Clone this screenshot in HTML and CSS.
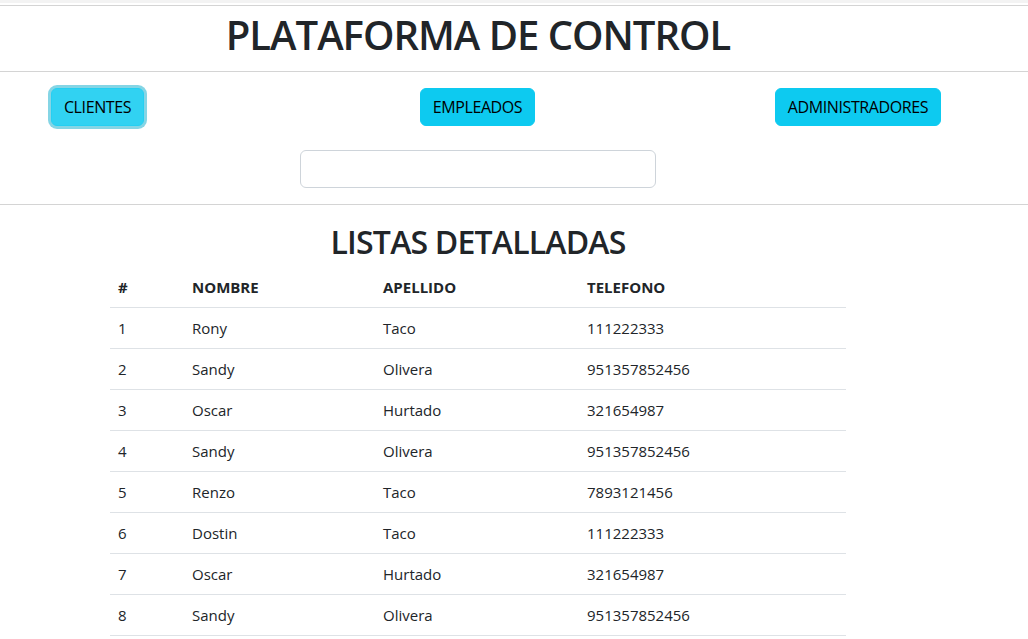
FILE: index.html
```html
<!DOCTYPE html>
<html lang="es">
<head>
<meta charset="utf-8">
<title>Plataforma de control</title>
<link rel="stylesheet" href="styles.css">
</head>
<body>
<div class="topstrip"></div>
<hr class="rule rule-top">
<div class="page">
  <h1 class="title">PLATAFORMA DE CONTROL</h1>
</div>
<hr class="rule">
<div class="page">
  <nav class="tabs">
    <div class="tab-cell"><button class="btn btn-active">CLIENTES</button></div>
    <div class="tab-cell"><button class="btn">EMPLEADOS</button></div>
    <div class="tab-cell"><button class="btn">ADMINISTRADORES</button></div>
  </nav>
  <div class="search-row"><input class="search" type="text"></div>
</div>
<hr class="rule">
<div class="page">
  <h2 class="subtitle">LISTAS DETALLADAS</h2>
  <table class="list">
    <thead>
      <tr><th class="c1">#</th><th class="c2">NOMBRE</th><th class="c3">APELLIDO</th><th class="c4">TELEFONO</th></tr>
    </thead>
    <tbody>
      <tr><td>1</td><td>Rony</td><td>Taco</td><td>111222333</td></tr>
      <tr><td>2</td><td>Sandy</td><td>Olivera</td><td>951357852456</td></tr>
      <tr><td>3</td><td>Oscar</td><td>Hurtado</td><td>321654987</td></tr>
      <tr><td>4</td><td>Sandy</td><td>Olivera</td><td>951357852456</td></tr>
      <tr><td>5</td><td>Renzo</td><td>Taco</td><td>7893121456</td></tr>
      <tr><td>6</td><td>Dostin</td><td>Taco</td><td>111222333</td></tr>
      <tr><td>7</td><td>Oscar</td><td>Hurtado</td><td>321654987</td></tr>
      <tr><td>8</td><td>Sandy</td><td>Olivera</td><td>951357852456</td></tr>
    </tbody>
  </table>
</div>
</body>
</html>
```
FILE: styles.css
```css
html, body {
  margin: 0;
  padding: 0;
  background: #fff;
}
body {
  font-family: "Open Sans", "Noto Sans", sans-serif;
  font-size: 16px;
  line-height: 1.5;
  color: #212529;
  overflow: hidden;
}
.topstrip {
  height: 3px;
  background: #f3f3f3;
}
.rule {
  border: 0;
  border-top: 1px solid #d4d4d4;
  margin: 0;
}
.rule-top {
  margin-top: 2px;
}
.page {
  width: 956px;
}
.title {
  margin: 0;
  padding: 5px 0 12px;
  text-align: center;
  font-size: 40px;
  line-height: 48px;
  font-weight: 600;
  letter-spacing: -1px;
}
.tabs {
  display: grid;
  grid-template-columns: 195px 565px 196px;
  justify-items: center;
  padding-top: 16px;
}
.btn {
  font-family: inherit;
  font-size: 16px;
  line-height: 24px;
  height: 38px;
  padding: 6px 12px;
  border: 1px solid #0dcaf0;
  border-radius: 6px;
  background: #0dcaf0;
  color: #000;
  letter-spacing: -0.4px;
}
.btn-active {
  background: #31d2f2;
  border-color: #25cff2;
  box-shadow: 0 0 0 3px rgba(11, 172, 204, 0.5);
}
.search-row {
  display: flex;
  justify-content: center;
  padding: 24px 0 16px;
}
.search {
  width: 356px;
  height: 38px;
  box-sizing: border-box;
  border: 1px solid #ced4da;
  border-radius: 6px;
  background: #fff;
}
.subtitle {
  margin: 0;
  padding: 18px 0 6px;
  text-align: center;
  font-size: 32px;
  line-height: 38px;
  font-weight: 600;
  letter-spacing: -0.8px;
}
.list {
  margin: 0 0 0 110px;
  width: 736px;
  border-collapse: collapse;
}
.list th, .list td {
  padding: 8px;
  text-align: left;
  border-bottom: 1px solid #dee2e6;
  line-height: 24px;
  font-size: 15px;
}
.list th {
  font-weight: 700;
}
.c1 { width: 58px; }
.c2 { width: 175px; }
.c3 { width: 188px; }
.c4 { width: 251px; }
```
